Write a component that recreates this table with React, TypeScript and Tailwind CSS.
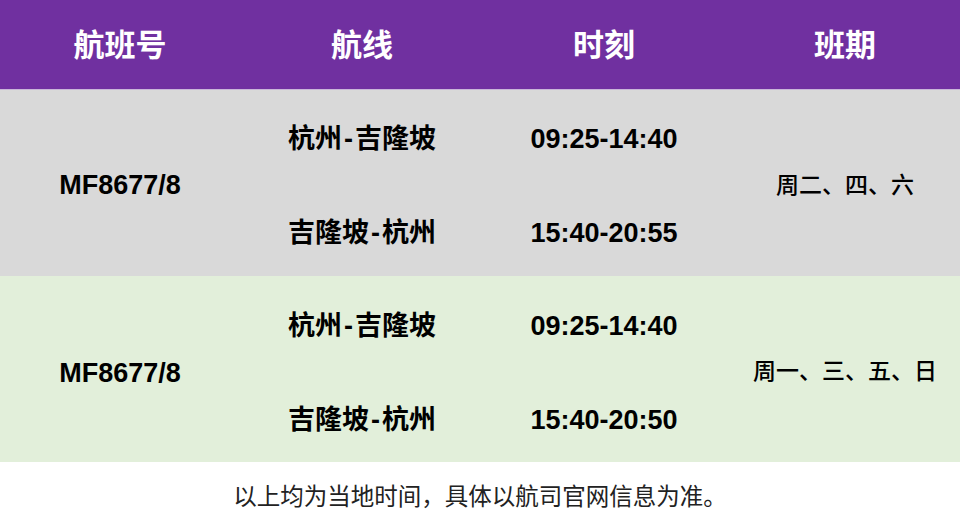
import React from "react";

const font = { fontFamily: '"Liberation Sans", "Noto Sans CJK SC", sans-serif' };

type Row = { no: string; routes: [string, string]; times: [string, string]; days: string; bg: string };

const rows: Row[] = [
  { no: "MF8677/8", routes: ["杭州-吉隆坡", "吉隆坡-杭州"], times: ["09:25-14:40", "15:40-20:55"], days: "周二、四、六", bg: "bg-[#d9d9d9]" },
  { no: "MF8677/8", routes: ["杭州-吉隆坡", "吉隆坡-杭州"], times: ["09:25-14:40", "15:40-20:50"], days: "周一、三、五、日", bg: "bg-[#e2efda]" },
];

function Route({ t }: { t: string }) {
  const [a, b] = t.split("-");
  return (
    <span>
      {a}
      <span className="mx-[2px]">-</span>
      {b}
    </span>
  );
}

export default function App() {
  return (
    <div className="w-[960px] h-[522px] bg-white flex flex-col text-black" style={font}>
      <div className="h-[90px] bg-[#7030a0] grid grid-cols-4 items-center text-white text-[31px] font-bold border-b border-[#c9b6d9] pt-[4px]">
        <div className="text-center">航班号</div>
        <div className="text-center pl-[4px]">航线</div>
        <div className="text-center pl-[8px]">时刻</div>
        <div className="text-center pl-[10px]">班期</div>
      </div>
      {rows.map((r, i) => (
        <div key={i} className={`h-[186px] grid grid-cols-4 ${r.bg}`}>
          <div className={`flex items-center justify-center text-[27px] font-bold ${i === 0 ? "pt-[5px]" : "pt-[8px]"}`}>{r.no}</div>
          <div className={`flex flex-col items-center justify-center gap-[54px] text-[27px] leading-[40px] font-bold pl-[4px] ${i === 0 ? "pt-[5px]" : "pt-[7px]"}`}>
            {r.routes.map((t, j) => (
              <div key={j}>
                <Route t={t} />
              </div>
            ))}
          </div>
          <div className={`flex flex-col items-center justify-center gap-[54px] text-[27px] leading-[40px] font-bold pl-[8px] ${i === 0 ? "pt-[5px]" : "pt-[7px]"}`}>
            {r.times.map((t, j) => (
              <div key={j}>{t}</div>
            ))}
          </div>
          <div className="flex items-center justify-center text-[23px] font-medium pl-[10px] pt-[4px]">{r.days}</div>
        </div>
      ))}
      <div className="flex-1 flex items-center justify-center text-[23.5px] text-[#222] pt-[12px]">
        以上均为当地时间，具体以航司官网信息为准。
      </div>
    </div>
  );
}
